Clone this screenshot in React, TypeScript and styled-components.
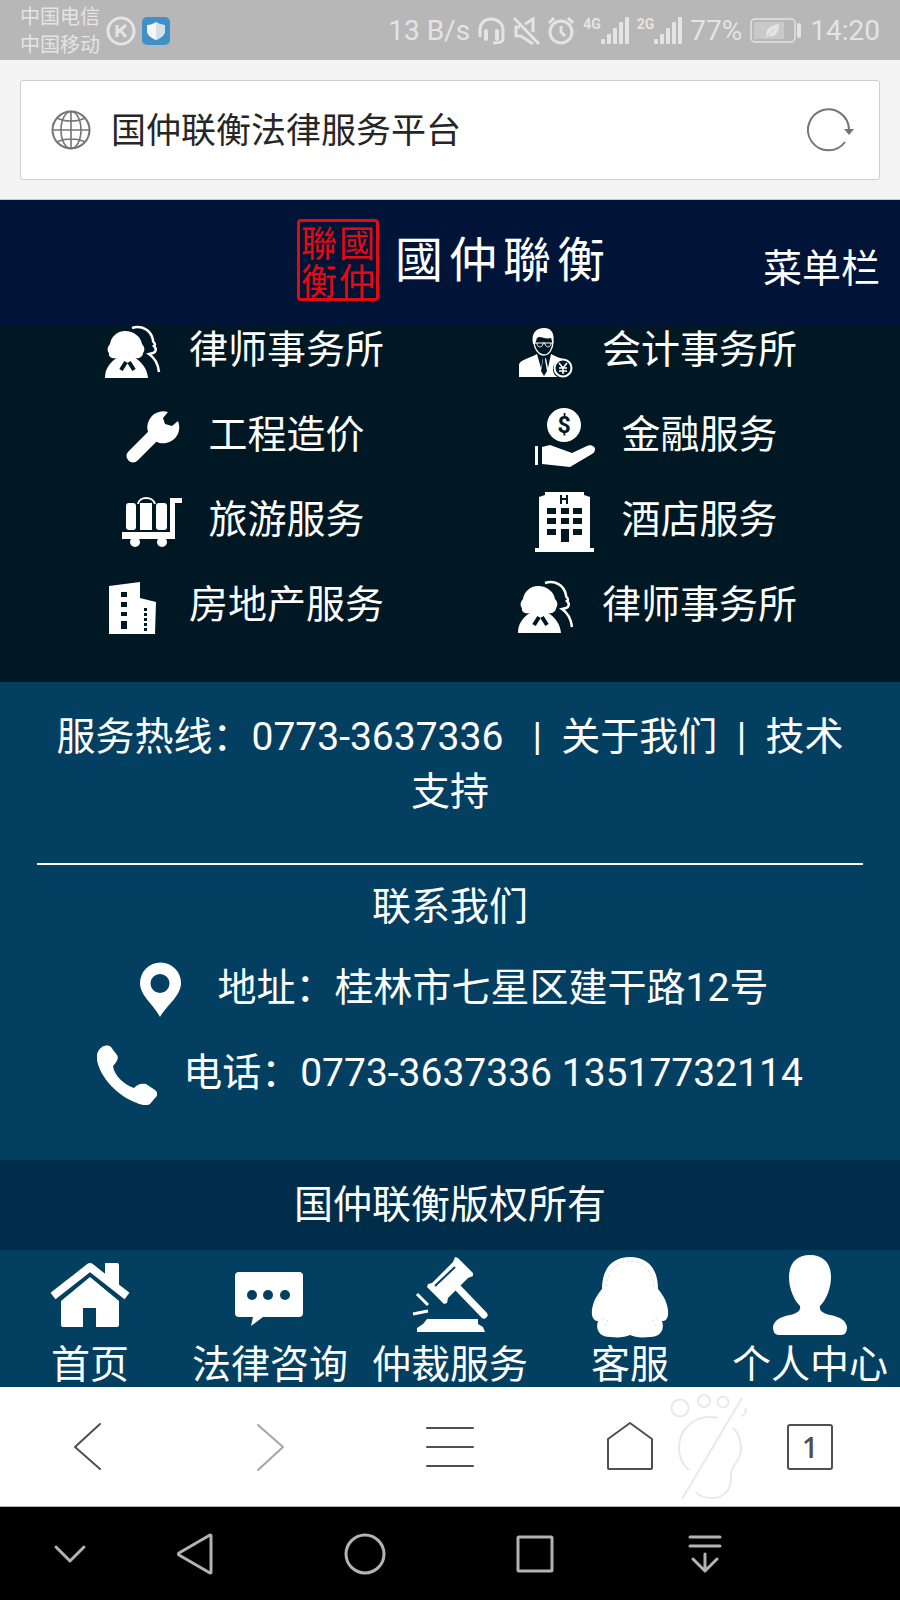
import React from "react";
import styled, { createGlobalStyle } from "styled-components";

const color = {
  status: "#b7b7b7",
  statusInk: "#e4e4e4",
  header: "#001437",
  services: "#001823",
  footer: "#033f61",
  copyright: "#002d4a",
  white: "#ffffff",
  ink: "#4f4f4f",
  faint: "#a5a5a5",
  seal: "#e30a12",
};

const GlobalStyle = createGlobalStyle`
  * { box-sizing: border-box; }
  body {
    margin: 0;
    font-family: Roboto, "Noto Sans CJK SC", sans-serif;
    font-size: 39px;
    line-height: 55px;
    color: ${color.white};
    background: ${color.services};
  }
  button {
    margin: 0;
    padding: 0;
    border: 0;
    background: none;
    color: inherit;
    font: inherit;
    cursor: pointer;
  }
  a { color: inherit; text-decoration: none; }
  svg { display: block; flex: none; }
`;

const Page = styled.div`
  display: flex;
  flex-direction: column;
  min-height: 100vh;
`;

/* ---------- status bar ---------- */

const StatusBar = styled.div`
  display: flex;
  align-items: center;
  justify-content: space-between;
  height: 60px;
  padding: 2px 20px 0;
  background: ${color.status};
  color: ${color.statusInk};
  font-size: 28px;
  line-height: 40px;
`;

const StatusGroup = styled.div<{ $gap: number }>`
  display: flex;
  align-items: center;
  gap: ${(p) => p.$gap}px;
  white-space: nowrap;
`;

const Carriers = styled.div`
  font-size: 20px;
  line-height: 28px;
`;

const Network = styled.div`
  display: flex;
  align-items: flex-start;
  height: 28px;
  font-size: 14px;
  font-weight: 700;
  line-height: 14px;
`;

const Signal = ({ label }: { label: string }) => (
  <Network>
    {label}
    <svg width="28" height="28" viewBox="0 0 28 28" fill="currentColor">
      <rect x="0" y="22" width="4" height="5" rx="1" />
      <rect x="6" y="17" width="4" height="10" rx="1" />
      <rect x="12" y="11" width="4" height="16" rx="1" />
      <rect x="18" y="5" width="4" height="22" rx="1" />
      <rect x="24" y="0" width="4" height="27" rx="1" />
    </svg>
  </Network>
);

const KIcon = () => (
  <svg width="30" height="30" viewBox="0 0 30 30" fill="none" stroke="currentColor">
    <circle cx="15" cy="15" r="13" strokeWidth="3" />
    <path d="M11 9V21M20 9L12 16M14 14L20 21" strokeWidth="3" />
  </svg>
);

const ShieldIcon = () => (
  <svg width="28" height="28" viewBox="0 0 28 28">
    <rect width="28" height="28" rx="5" fill="#3f90c8" />
    <path d="M14 5C17 7 20 8 23 8V14C23 18 19 21 14 23C9 21 5 18 5 14V8C8 8 11 7 14 5Z" fill="#f2f7fa" />
    <path d="M14 5C17 7 20 8 23 8V14C23 18 19 21 14 23Z" fill="#d3e0e8" />
  </svg>
);

const HeadsetIcon = () => (
  <svg width="27" height="28" viewBox="0 0 27 28" fill="none" stroke="currentColor" strokeWidth="3">
    <path d="M2 20V13C2 6 7 2 13 2S25 6 25 13V21C25 25 22 26 15 26" />
    <path d="M8 14V22M19 14V22" strokeWidth="4" strokeLinecap="round" />
  </svg>
);

const MuteIcon = () => (
  <svg width="27" height="28" viewBox="0 0 27 28" fill="none" stroke="currentColor" strokeWidth="3">
    <path d="M1 1L26 27" />
    <path d="M12 7L20 2V15M7 10H3V19H8L20 27" />
  </svg>
);

const AlarmIcon = () => (
  <svg width="27" height="28" viewBox="0 0 27 28" fill="none" stroke="currentColor" strokeWidth="3">
    <circle cx="13" cy="15" r="11" />
    <path d="M1 6L6 1M25 6L20 1M13 9V15L17 19" />
  </svg>
);

const BatteryIcon = () => (
  <svg width="52" height="26" viewBox="0 0 52 26">
    <rect x="1" y="1" width="44" height="23" rx="4" fill="none" stroke="currentColor" strokeWidth="1.5" />
    <rect x="4" y="4" width="30" height="17" fill="#c9c9c9" />
    <path d="M16 19C15 12 20 7 29 6C29 15 25 20 18 18L16 20Z" fill="currentColor" />
    <path d="M17 18L24 11" stroke="#c9c9c9" />
    <rect x="47" y="5" width="4" height="15" rx="2" fill="currentColor" />
  </svg>
);

/* ---------- address bar ---------- */

const AddressArea = styled.div`
  padding: 20px 20px 19px;
  background: #f4f4f4;
  border-bottom: 1px solid #c3ccd3;
`;

const AddressBox = styled.label`
  display: flex;
  align-items: center;
  gap: 20px;
  height: 100px;
  padding: 0 24px 0 30px;
  background: ${color.white};
  border: 1px solid #cfcfcf;
  border-radius: 3px;
  color: #757575;
`;

const AddressInput = styled.input`
  flex: 1;
  min-width: 0;
  padding: 2px 0 0;
  border: 0;
  outline: 0;
  background: none;
  color: #262626;
  font: inherit;
  font-size: 35px;
`;

const GlobeIcon = () => (
  <svg width="40" height="40" viewBox="0 0 40 40" fill="none" stroke="currentColor" strokeWidth="1.6">
    <circle cx="20" cy="20" r="18.5" strokeWidth="2" />
    <ellipse cx="20" cy="20" rx="10" ry="18.5" />
    <path d="M20 1V39M1 20H39M6 8C13 12 27 12 34 8M6 32C13 28 27 28 34 32" />
  </svg>
);

const ReloadIcon = () => (
  <svg width="48" height="44" viewBox="0 0 48 44" fill="none" stroke="currentColor" strokeWidth="2">
    <path d="M38 34A20.500 20.500 0 1 1 42 22" />
    <path d="M37 21H47L42 27Z" fill="currentColor" stroke="none" />
  </svg>
);

/* ---------- site header ---------- */

const Header = styled.header`
  display: grid;
  grid-template-columns: 1fr auto 1fr;
  align-items: center;
  height: 125px;
  padding: 0 20px;
  background: ${color.header};
`;

const Logo = styled.a`
  grid-column: 2;
  display: flex;
  align-items: center;
  gap: 16px;
  padding: 0 0 5px 2px;
  font-family: "Noto Sans CJK TC", sans-serif;
`;

const Seal = styled.span`
  display: grid;
  grid-template-columns: 1fr 1fr;
  width: 82px;
  height: 82px;
  border: 3px solid ${color.seal};
  border-radius: 4px;
  color: ${color.seal};
  font-size: 36px;
  line-height: 38px;
  text-align: center;
`;

const Wordmark = styled.span`
  display: flex;
  gap: 6px;
  padding-bottom: 8px;
  font-size: 48px;
  line-height: 64px;
`;

const MenuButton = styled.button`
  justify-self: end;
  padding-top: 14px;
`;

/* ---------- services ---------- */

const Services = styled.nav`
  display: grid;
  grid-template-columns: 1fr 1fr;
  row-gap: 31px;
  padding: 0 37px 48px;
  background: ${color.services};
`;

const IconLine = styled.a`
  display: flex;
  align-items: center;
  justify-content: center;
  gap: 26px;
  height: 54px;
`;

const IconLabel = styled.span`
  padding-bottom: 4px;
  white-space: nowrap;
`;

const Icon60 = ({ children }: { children: React.ReactNode }) => (
  <svg width="60" height="60" viewBox="0 0 60 60" fill={color.white}>
    {children}
  </svg>
);

const LawyerIcon = () => (
  <Icon60>
    <path d="M22 9C14 9 8 15 7 22C4 25 4 29 6 31C5 35 9 37 14 36C16 39 29 39 31 36C36 37 40 35 40 31C42 29 42 25 39 22C38 15 31 9 22 9Z" />
    <path d="M2 56C2 47 6 41 15 35H31C40 41 44 47 45 56Z" />
    <path d="M18 48L23 40M31 48L26 40" stroke={color.services} strokeWidth="4" />
    <path d="M29 6C39 3 48 8 50 18C49 20 54 22 51 24C54 27 53 30 50 31L46 32C52 36 55 42 56 50" fill="none" stroke={color.white} strokeWidth="2.5" />
  </Icon60>
);

const AccountantIcon = () => (
  <Icon60>
    <path d="M17 22C15 11 20 6 28 6C36 6 39 12 37 22L35 16C29 18 24 13 21 16L19 22Z" />
    <path d="M18 19C18 27 23 33 28 33S37 27 37 19" fill="none" stroke={color.white} strokeWidth="1.3" />
    <path d="M18 21H37M21 21C21 26 26 26 27 22C28 20 28 20 29 22C30 26 35 26 35 21" fill="none" stroke={color.white} />
    <path d="M3 55V43C3 38 14 36 21 32L25 46L27 36H30L32 46L35 32C42 36 46 36 49 38C42 37 37 42 37 47C37 51 39 54 42 55Z" />
    <path d="M26 34H30L29 38L31 49L28 54L25 49L27 38Z" fill={color.services} />
    <circle cx="47" cy="46" r="8.5" fill="none" stroke={color.white} strokeWidth="2" />
    <path d="M43 41L47 46L51 41M47 46V52M43 46H51M43 49H51" fill="none" stroke={color.white} strokeWidth="1.5" />
  </Icon60>
);

const WrenchIcon = () => (
  <Icon60>
    <path d="M11 49L34 26" stroke={color.white} strokeWidth="13" strokeLinecap="round" />
    <path d="M46 5A16 16 0 1 0 56 14L50 19L43 17L41 11Z" />
  </Icon60>
);

const MoneyIcon = () => (
  <Icon60>
    <circle cx="29" cy="18" r="17" />
    <text x="29" y="26" fill={color.services} fontSize="23" fontWeight="700" textAnchor="middle">
      $
    </text>
    <path d="M0 39H3V58H0ZM7 40L15 38L37 46L52 39C55 37 60 39 60 42C60 44 59 46 57 47L35 60L7 57Z" />
  </Icon60>
);

const LuggageIcon = () => (
  <Icon60>
    <rect x="4" y="11" width="10" height="27" rx="3" />
    <rect x="18" y="11" width="12" height="27" />
    <rect x="34" y="11" width="11" height="27" rx="3" />
    <path d="M16 12C17 4 31 4 33 12" fill="none" stroke={color.white} strokeWidth="2" />
    <path d="M0 40H48V6H60V11H53V47H0Z" />
    <circle cx="13" cy="50" r="5" />
    <circle cx="40" cy="50" r="5" />
  </Icon60>
);

const HotelIcon = () => (
  <Icon60>
    <path d="M4 5L10 3V0H49V3L55 5V56H59V60H0V56H4Z" />
    <path
      d="M25 3H27V6H31V3H33V12H31V8H27V12H25ZM12 16H21V22H12ZM26 16H34V22H26ZM38 16H47V22H38ZM12 26H21V32H12ZM26 26H34V32H26ZM38 26H47V32H38ZM12 37H21V43H12ZM26 37H34V50H26ZM38 37H47V43H38Z"
      fill={color.services}
    />
  </Icon60>
);

const EstateIcon = () => (
  <Icon60>
    <path d="M6 9L37 5V21L53 25L52 57H6Z" />
    <path
      d="M18 15H24V20H18ZM18 25H24V30H18ZM18 35H24V39H18ZM18 44H24V52H18ZM41 31H44V34H41ZM41 36H44V39H41ZM41 41H44V44H41ZM41 46H44V49H41ZM41 51H44V54H41Z"
      fill={color.services}
    />
  </Icon60>
);

const services = [
  { label: "律师事务所", Icon: LawyerIcon },
  { label: "会计事务所", Icon: AccountantIcon },
  { label: "工程造价", Icon: WrenchIcon },
  { label: "金融服务", Icon: MoneyIcon },
  { label: "旅游服务", Icon: LuggageIcon },
  { label: "酒店服务", Icon: HotelIcon },
  { label: "房地产服务", Icon: EstateIcon },
  { label: "律师事务所", Icon: LawyerIcon },
];

/* ---------- footer ---------- */

const Footer = styled.footer`
  flex: 1;
  padding: 28px 37px 58px;
  background: ${color.footer};
  text-align: center;
`;

const FooterText = styled.p`
  margin: 0;
`;

const Divider = styled.hr`
  height: 2px;
  margin: 43px 0 15px;
  border: 0;
  background: ${color.white};
`;

const Contacts = styled.address`
  display: flex;
  flex-direction: column;
  gap: 31px;
  margin-top: 28px;
  font-style: normal;
`;

const PinIcon = () => (
  <Icon60>
    <path fillRule="evenodd" d="M28 57C23 46 8 36 8 23A20.500 20.500 0 0 1 49 23C49 36 34 46 28 57ZM28 14A9.500 9.500 0 1 0 28 33A9.500 9.500 0 1 0 28 14Z" />
  </Icon60>
);

const PhoneIcon = () => (
  <Icon60>
    <path d="M5 2C8 0 12 0 14 2L20 10C22 13 20 17 16 21C17 30 27 40 37 43C40 39 45 38 49 39L58 45C61 47 61 51 58 53L53 59C50 61 44 60 40 58C20 51 3 32 0 15C-1 9 1 5 5 2Z" />
  </Icon60>
);

const Copyright = styled.div`
  padding: 18px 0 17px;
  background: ${color.copyright};
  text-align: center;
`;

/* ---------- site tab bar ---------- */

const Tabs = styled.nav`
  display: grid;
  grid-template-columns: repeat(5, 1fr);
  padding-top: 5px;
  background: ${color.footer};
`;

const Tab = styled.a`
  display: flex;
  flex-direction: column;
  align-items: center;
  gap: 8px;
  line-height: 44px;
  white-space: nowrap;
`;

const Icon80 = ({ children }: { children: React.ReactNode }) => (
  <svg width="80" height="80" viewBox="0 0 80 80" fill={color.white} overflow="visible">
    {children}
  </svg>
);

const HomeIcon = () => (
  <Icon80>
    <path d="M55 8H67Q69 8 69 10V32L55 21Z" />
    <path d="M3 41L40 12L77 41" fill="none" stroke={color.white} strokeWidth="8" strokeLinejoin="round" />
    <path d="M11 46L40 22L69 46V70Q69 72 67 72H46V53H33V72H13Q11 72 11 70Z" />
    <path d="M7 46L40 20L73 46" fill="none" stroke={color.footer} strokeWidth="2" />
  </Icon80>
);

const ChatIcon = () => (
  <Icon80>
    <path d="M9 17H69Q73 17 73 21V58Q73 62 69 62H33L21 71L23 62H9Q5 62 5 58V21Q5 17 9 17Z" />
    <g fill={color.footer}>
      <circle cx="22" cy="40" r="5" />
      <circle cx="38" cy="40" r="5" />
      <circle cx="55" cy="40" r="5" />
    </g>
  </Icon80>
);

const GavelIcon = () => (
  <Icon80>
    <path d="M45 2L48 3L63 18V21L58 23L38 43L37 48L34 49L17 32L18 29L22 28L43 7Z" />
    <path d="M45 12L25 31" stroke={color.footer} strokeWidth="2" />
    <path d="M48 33L74 60" stroke={color.white} strokeWidth="7" strokeLinecap="round" />
    <path d="M7 39L18 50M3 59L18 56" stroke={color.white} strokeWidth="3" />
    <path d="M17 64H68V69L73 72L75 77H7V73L13 69Z" />
  </Icon80>
);

const ServiceIcon = () => (
  <Icon80>
    <path d="M40 2C22 2 12 14 12 34C5 42 1 52 2 60C3 65 6 66 8 66C5 75 10 82 20 82C30 83 35 82 40 80C45 82 50 83 60 82C70 82 75 75 72 66C75 66 77 65 78 60C79 52 75 42 68 34C68 14 58 2 40 2Z" />
    <path d="M16 32C17 16 27 6 40 6S63 16 64 32M12 63L18 66L14 72M68 63L62 66L66 72" fill="none" stroke="#dce3e8" strokeDasharray="3 2" />
  </Icon80>
);

const UserIcon = () => (
  <Icon80>
    <path d="M40 0C54 0 61 9 61 22C61 34 56 45 50 51C49 56 53 58 60 60C71 62 76 66 77 72C77 77 75 80 71 80H9C5 80 3 77 3 72C4 66 9 62 20 60C27 58 31 56 30 51C24 45 19 34 19 22C19 9 26 0 40 0Z" />
  </Icon80>
);

const tabs = [
  { label: "首页", Icon: HomeIcon },
  { label: "法律咨询", Icon: ChatIcon },
  { label: "仲裁服务", Icon: GavelIcon },
  { label: "客服", Icon: ServiceIcon },
  { label: "个人中心", Icon: UserIcon },
];

/* ---------- browser toolbar ---------- */

const Toolbar = styled.div`
  position: relative;
  display: grid;
  grid-template-columns: repeat(5, 1fr);
  align-items: center;
  justify-items: center;
  height: 120px;
  background: ${color.white};
  border-bottom: 1px solid #b5b5b5;
  color: ${color.ink};
`;

const ToolButton = styled.button<{ $muted?: boolean }>`
  display: grid;
  place-items: center;
  width: 60px;
  height: 60px;
  color: ${(p) => (p.$muted ? color.faint : color.ink)};
`;

const TabCount = styled.span`
  display: grid;
  place-items: center;
  width: 46px;
  height: 46px;
  border: 2px solid currentColor;
  border-radius: 3px;
  font-family: "Open Sans", sans-serif;
  font-size: 28px;
  font-weight: 600;
  line-height: 40px;
`;

const Footprint = styled.svg`
  position: absolute;
  top: 3px;
  right: 17%;
  pointer-events: none;
`;

const ToolIcon = ({ d }: { d: string }) => (
  <svg width="50" height="50" viewBox="0 0 50 50" fill="none" stroke="currentColor" strokeWidth="2" strokeLinecap="round" strokeLinejoin="round">
    <path d={d} />
  </svg>
);

/* ---------- system navigation ---------- */

const SystemBar = styled.div`
  display: grid;
  grid-template-columns: 80fr 170fr 170fr 170fr 170fr;
  align-items: center;
  justify-items: center;
  height: 94px;
  padding: 0 110px 0 30px;
  background: #000;
  color: #b3b3b3;
`;

const SystemIcon = ({ d, children }: { d?: string; children?: React.ReactNode }) => (
  <svg width="44" height="44" viewBox="0 0 44 44" fill="none" stroke="currentColor" strokeWidth="3" strokeLinecap="round" strokeLinejoin="round">
    {d && <path d={d} />}
    {children}
  </svg>
);

export default function App() {
  return (
    <Page>
      <GlobalStyle />
      <StatusBar>
        <StatusGroup $gap={6}>
          <Carriers>
            中国电信
            <br />
            中国移动
          </Carriers>
          <KIcon />
          <ShieldIcon />
        </StatusGroup>
        <StatusGroup $gap={8}>
          <span>13 B/s</span>
          <HeadsetIcon />
          <MuteIcon />
          <AlarmIcon />
          <Signal label="4G" />
          <Signal label="2G" />
          <span>77%</span>
          <BatteryIcon />
          <span>14:20</span>
        </StatusGroup>
      </StatusBar>

      <AddressArea>
        <AddressBox>
          <GlobeIcon />
          <AddressInput aria-label="地址" defaultValue="国仲联衡法律服务平台" />
          <button aria-label="刷新">
            <ReloadIcon />
          </button>
        </AddressBox>
      </AddressArea>

      <Header>
        <Logo href="#home">
          <Seal>
            <span>聯</span>
            <span>國</span>
            <span>衡</span>
            <span>仲</span>
          </Seal>
          <Wordmark>
            <span>國</span>
            <span>仲</span>
            <span>聯</span>
            <span>衡</span>
          </Wordmark>
        </Logo>
        <MenuButton>菜单栏</MenuButton>
      </Header>

      <Services>
        {services.map(({ label, Icon }, i) => (
          <IconLine key={i} href="#service">
            <Icon />
            <IconLabel>{label}</IconLabel>
          </IconLine>
        ))}
      </Services>

      <Footer>
        <FooterText>
          服务热线：0773-3637336{"\u00a0\u00a0 |\u00a0 "}
          <a href="#about">关于我们</a>
          {"\u00a0 |\u00a0 "}
          <a href="#support">
            技术
            <wbr />
            支持
          </a>
        </FooterText>
        <Divider />
        <FooterText>联系我们</FooterText>
        <Contacts>
          <IconLine as="div">
            <PinIcon />
            <IconLabel>地址：桂林市七星区建干路12号</IconLabel>
          </IconLine>
          <IconLine href="tel:07733637336">
            <PhoneIcon />
            <IconLabel>电话：0773-3637336 13517732114</IconLabel>
          </IconLine>
        </Contacts>
      </Footer>
      <Copyright>国仲联衡版权所有</Copyright>

      <Tabs>
        {tabs.map(({ label, Icon }) => (
          <Tab key={label} href="#tab">
            <Icon />
            {label}
          </Tab>
        ))}
      </Tabs>

      <Toolbar>
        <ToolButton aria-label="后退">
          <ToolIcon d="M35 2L10 25L35 47" />
        </ToolButton>
        <ToolButton aria-label="前进" $muted>
          <ToolIcon d="M13 3L38 25L13 48" />
        </ToolButton>
        <ToolButton aria-label="菜单">
          <ToolIcon d="M2 6H48M2 25H48M2 44H48" />
        </ToolButton>
        <ToolButton aria-label="主页">
          <ToolIcon d="M25 1L47 17V46Q47 47 46 47H4Q3 47 3 46V17Z" />
        </ToolButton>
        <ToolButton aria-label="标签页">
          <TabCount>1</TabCount>
        </ToolButton>
        <Footprint width="80" height="112" viewBox="0 0 80 112" fill="none" stroke="#e9e9e9" strokeWidth="2">
          <circle cx="13" cy="18" r="8.500" />
          <circle cx="37" cy="11" r="6" />
          <circle cx="56" cy="12" r="5.500" />
          <path d="M78 18C80 22 78 25 74 26M51 28C29 23 12 38 12 58C12 67 16 75 22 80M66 38C72 44 74 51 74 58C75 70 64 76 64 84C65 98 59 108 45 108C38 108 32 106 29 102M75 8L15 109" />
        </Footprint>
      </Toolbar>

      <SystemBar>
        <button aria-label="收起">
          <SystemIcon d="M8 15L22 29L36 15" />
        </button>
        <button aria-label="返回">
          <SystemIcon d="M38 4V40Q38 41 37 41L6 23Q5 22 6 21L37 3Q38 3 38 4Z" />
        </button>
        <button aria-label="桌面">
          <SystemIcon>
            <circle cx="22" cy="22" r="19" />
          </SystemIcon>
        </button>
        <button aria-label="最近任务">
          <SystemIcon>
            <rect x="5" y="5" width="34" height="34" rx="1" />
          </SystemIcon>
        </button>
        <button aria-label="通知栏">
          <SystemIcon d="M7 5H37M7 14H37M22 22V38M10 27L22 39L34 27" />
        </button>
      </SystemBar>
    </Page>
  );
}
